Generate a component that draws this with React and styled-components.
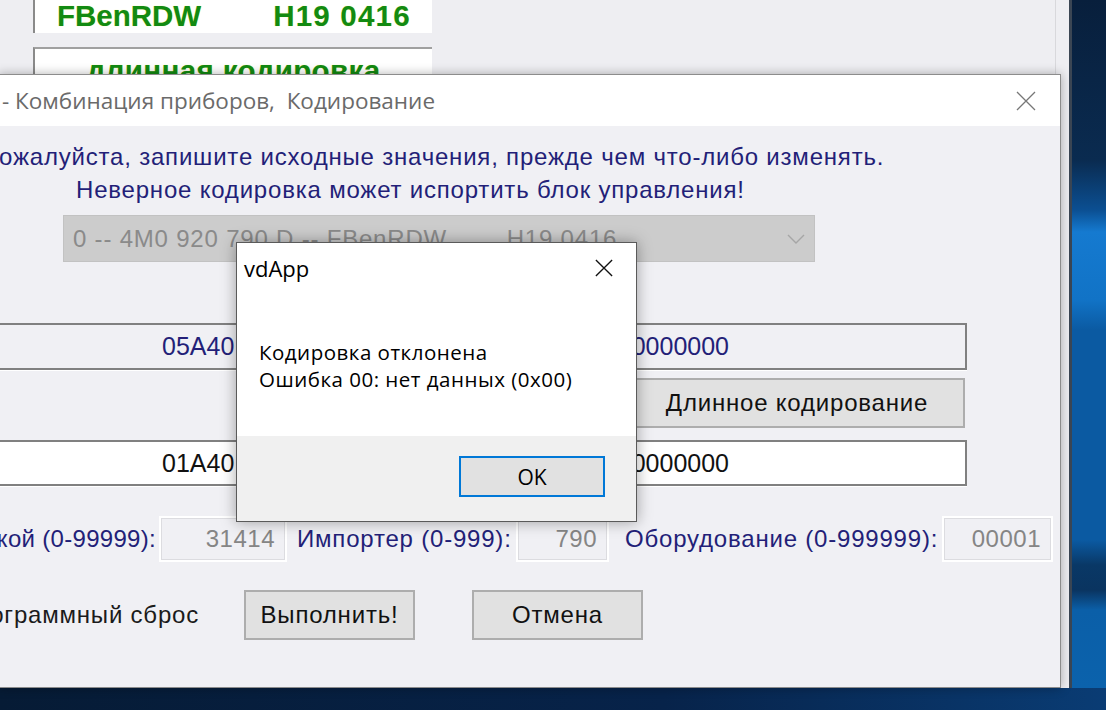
import React from 'react';
import styled, { createGlobalStyle } from 'styled-components';

const GlobalStyle = createGlobalStyle`
html, body {
  margin: 0;
  padding: 0;
  overflow: hidden;
}
`;

const navy = '#231f78';

const Screen = styled.div`
position: relative;
width: 1106px;
height: 710px;
overflow: hidden;
font-family: "Liberation Sans", Arial, sans-serif;
background:
  linear-gradient(to right, #061b35 0%, #07234a 60%, #0a3c74 100%) bottom / 100% 22px no-repeat,
  linear-gradient(to bottom, #081f3c 0px, #0a2b50 160px, #0b4f92 210px, #157ad0 232px, #1173c6 300px, #0b5aa2 330px, #0b5aa2 540px, #093866 565px, #0a3460 590px, #0b5fa8 610px, #0b62ac 688px);
`;

const BackWindow = styled.div`
position: absolute;
left: -10px;
top: -40px;
width: 1082px;
height: 728px;
box-sizing: border-box;
border-right: 3px solid #3b4654;
background: linear-gradient(to left, #eeeef2 13px, #d8d8dc 13px, #d8d8dc 14px, #eeeef2 14px);
padding-left: 43px;
`;

const InfoBox = styled.div`
width: 399px;
box-sizing: border-box;
background: #fff;
border-left: 2px solid #8a8a8a;
border-top: ${p => (p.$top ? '2px solid #a0a0a0' : 'none')};
height: ${p => p.$h}px;
margin-top: ${p => p.$mt || 0}px;
display: flex;
align-items: ${p => (p.$top ? 'flex-start' : 'flex-end')};
justify-content: ${p => (p.$center ? 'center' : 'flex-start')};
padding-left: ${p => (p.$center ? 0 : 22)}px;
font-weight: bold;
font-size: 29.5px;
color: #128a12;
text-shadow: 0 0 1px #e8f070;
`;

const Green = styled.span`
margin-left: ${p => p.$ml || 0}px;
line-height: 30px;
letter-spacing: ${p => p.$ls || 0}px;
padding-bottom: ${p => p.$pb || 0}px;
padding-top: ${p => p.$pt || 0}px;
`;

const FrontWindow = styled.div`
position: absolute;
left: -2px;
top: 74px;
width: 1063px;
height: 614px;
box-sizing: border-box;
border: 1px solid #8c8c8c;
background: #f0f0f4;
box-shadow: 0 0 10px rgba(0, 0, 0, 0.3);
overflow: hidden;
display: flex;
flex-direction: column;
`;

const TitleBar = styled.div`
height: 51px;
flex: none;
background: #fff;
display: flex;
align-items: center;
justify-content: space-between;
padding-left: 3px;
padding-right: 24px;
font-family: "Open Sans", "Noto Sans", sans-serif;
font-size: 22.5px;
color: #6a6a6a;
white-space: pre;
`;

const CloseIcon = ({ size = 20, color = '#777', width = 1.3 }) => (
  <svg width={size} height={size} viewBox="0 0 20 20">
    <path d="M1 1 L19 19 M19 1 L1 19" stroke={color} strokeWidth={width} fill="none" />
  </svg>
);

const Line = styled.div`
font-size: 24px;
letter-spacing: 0.8px;
line-height: 30px;
color: ${navy};
white-space: nowrap;
margin-top: ${p => p.$mt}px;
margin-left: ${p => p.$ml}px;
`;

const Combo = styled.div`
margin-top: 10px;
margin-left: 64px;
width: 752px;
height: 47px;
box-sizing: border-box;
background: #cccccc;
border: 1px solid #c2c2c2;
display: flex;
align-items: center;
justify-content: space-between;
padding: 0 8px 0 9px;
font-size: 24px;
letter-spacing: 0.8px;
color: #8a8a8a;
white-space: pre;
`;

const CodeField = styled.div`
margin-top: ${p => p.$mt}px;
margin-left: -40px;
width: 1008px;
height: ${p => p.$h}px;
box-sizing: border-box;
background: ${p => (p.$white ? '#fff' : '#f0f0f4')};
border: 2px solid #808080;
box-shadow: 0 1px 0 #fff;
display: flex;
align-items: center;
justify-content: space-between;
padding-left: 201px;
padding-right: 236px;
font-size: 25px;
color: ${p => (p.$white ? '#111' : navy)};
`;

const WinButton = styled.button`
width: ${p => p.$w}px;
height: ${p => p.$h || 50}px;
margin-left: ${p => p.$ml}px;
margin-top: ${p => p.$mt || 0}px;
flex: none;
box-sizing: border-box;
background: #e1e1e1;
border: 2px solid #adadad;
border-radius: 0;
padding: 0;
font-family: "Liberation Sans", Arial, sans-serif;
font-size: 24px;
letter-spacing: 0.8px;
color: #111;
`;

const FieldsRow = styled.div`
display: flex;
align-items: center;
height: ${p => p.$h}px;
margin-top: ${p => p.$mt}px;
`;

const Label = styled.div`
flex: none;
width: ${p => p.$w}px;
margin-left: ${p => p.$ml || 0}px;
display: flex;
justify-content: ${p => (p.$right ? 'flex-end' : 'flex-start')};
white-space: nowrap;
font-size: 24px;
letter-spacing: ${p => (p.$ls !== undefined ? p.$ls : 0.8)}px;
color: ${p => p.$color || navy};
`;

const NumInput = styled.div`
flex: none;
width: ${p => p.$w}px;
height: 46px;
margin-left: ${p => p.$ml}px;
box-sizing: border-box;
border: 2px solid #fff;
outline: 1px solid #dcdce0;
outline-offset: -3px;
background: #f0f0f4;
display: flex;
align-items: center;
justify-content: flex-end;
padding-right: 10px;
font-size: 24px;
letter-spacing: 0.5px;
color: #858585;
`;

const Popup = styled.div`
position: absolute;
left: 236px;
top: 242px;
width: 401px;
height: 280px;
box-sizing: border-box;
border: 1px solid #5a5a5a;
background: #fff;
box-shadow: 0 0 14px rgba(0, 0, 0, 0.35);
display: flex;
flex-direction: column;
font-family: "Open Sans", "Noto Sans", sans-serif;
color: #000;
`;

const PopupTitle = styled.div`
height: 50px;
display: flex;
align-items: center;
justify-content: space-between;
padding: 0 23px 0 7px;
font-size: 22px;
`;

const PopupBody = styled.div`
flex: 1;
padding: 46px 0 0 22px;
font-size: 20.5px;
letter-spacing: 0.5px;
line-height: 27px;
`;

const PopupFooter = styled.div`
height: 85px;
background: #f0f0f0;
padding: 20px 0 0 222px;
box-sizing: border-box;
`;

const OkButton = styled.button`
width: 146px;
height: 41px;
box-sizing: border-box;
border: 2px solid #0078d7;
background: #e1e1e1;
border-radius: 0;
font-family: "Open Sans", "Noto Sans", sans-serif;
font-size: 21px;
color: #000;
padding: 0;
`;

const Chevron = () => (
  <svg width="20" height="12" viewBox="0 0 20 12">
    <path d="M2 2 L10 10 L18 2" stroke="#a6a6a6" strokeWidth="1.4" fill="none" />
  </svg>
);

export default function App() {
  return (
    <Screen>
      <GlobalStyle />
      <BackWindow>
        <InfoBox $h={73}>
          <Green $pb={2}>FBenRDW</Green>
          <Green $ml={72} $pb={2} $ls={1.2}>H19 0416</Green>
        </InfoBox>
        <InfoBox $h={60} $mt={14} $top $center>
          <Green $pt={7} $ls={0.4}>длинная кодировка</Green>
        </InfoBox>
      </BackWindow>

      <FrontWindow>
        <TitleBar>
          <span>- Комбинация приборов,  Кодирование</span>
          <CloseIcon />
        </TitleBar>

        <Line $mt={16} $ml={-18}>Пожалуйста, запишите исходные значения, прежде чем что-либо изменять.</Line>
        <Line $mt={3} $ml={77}>Неверное кодировка может испортить блок управления!</Line>

        <Combo>
          <span>0 -- 4M0 920 790 D -- FBenRDW        H19 0416</span>
          <Chevron />
        </Combo>

        <CodeField $mt={61} $h={47}>
          <span>05A40</span>
          <span>0000000</span>
        </CodeField>

        <WinButton $w={336} $ml={630} $mt={8}>Длинное кодирование</WinButton>

        <CodeField $mt={12} $h={46} $white>
          <span>01A40</span>
          <span>0000000</span>
        </CodeField>

        <FieldsRow $h={46} $mt={30}>
          <Label $w={157} $right $ls={0.3}>Код мастерской (0-99999):</Label>
          <NumInput $w={128} $ml={3}>31414</NumInput>
          <Label $w={213} $ml={10}>Импортер (0-999):</Label>
          <NumInput $w={93} $ml={6}>790</NumInput>
          <Label $w={311} $ml={16}>Оборудование (0-999999):</Label>
          <NumInput $w={111} $ml={6}>00001</NumInput>
        </FieldsRow>

        <FieldsRow $h={50} $mt={28}>
          <Label $w={200} $right $color="#1b1b1b">Программный сброс</Label>
          <WinButton $w={171} $ml={45}>Выполнить!</WinButton>
          <WinButton $w={171} $ml={57}>Отмена</WinButton>
        </FieldsRow>
      </FrontWindow>

      <Popup>
        <PopupTitle>
          <span>vdApp</span>
          <CloseIcon size={18} color="#111" width={1.5} />
        </PopupTitle>
        <PopupBody>
          Кодировка отклонена
          <br />
          Ошибка 00: нет данных (0x00)
        </PopupBody>
        <PopupFooter>
          <OkButton>OK</OkButton>
        </PopupFooter>
      </Popup>
    </Screen>
  );
}
